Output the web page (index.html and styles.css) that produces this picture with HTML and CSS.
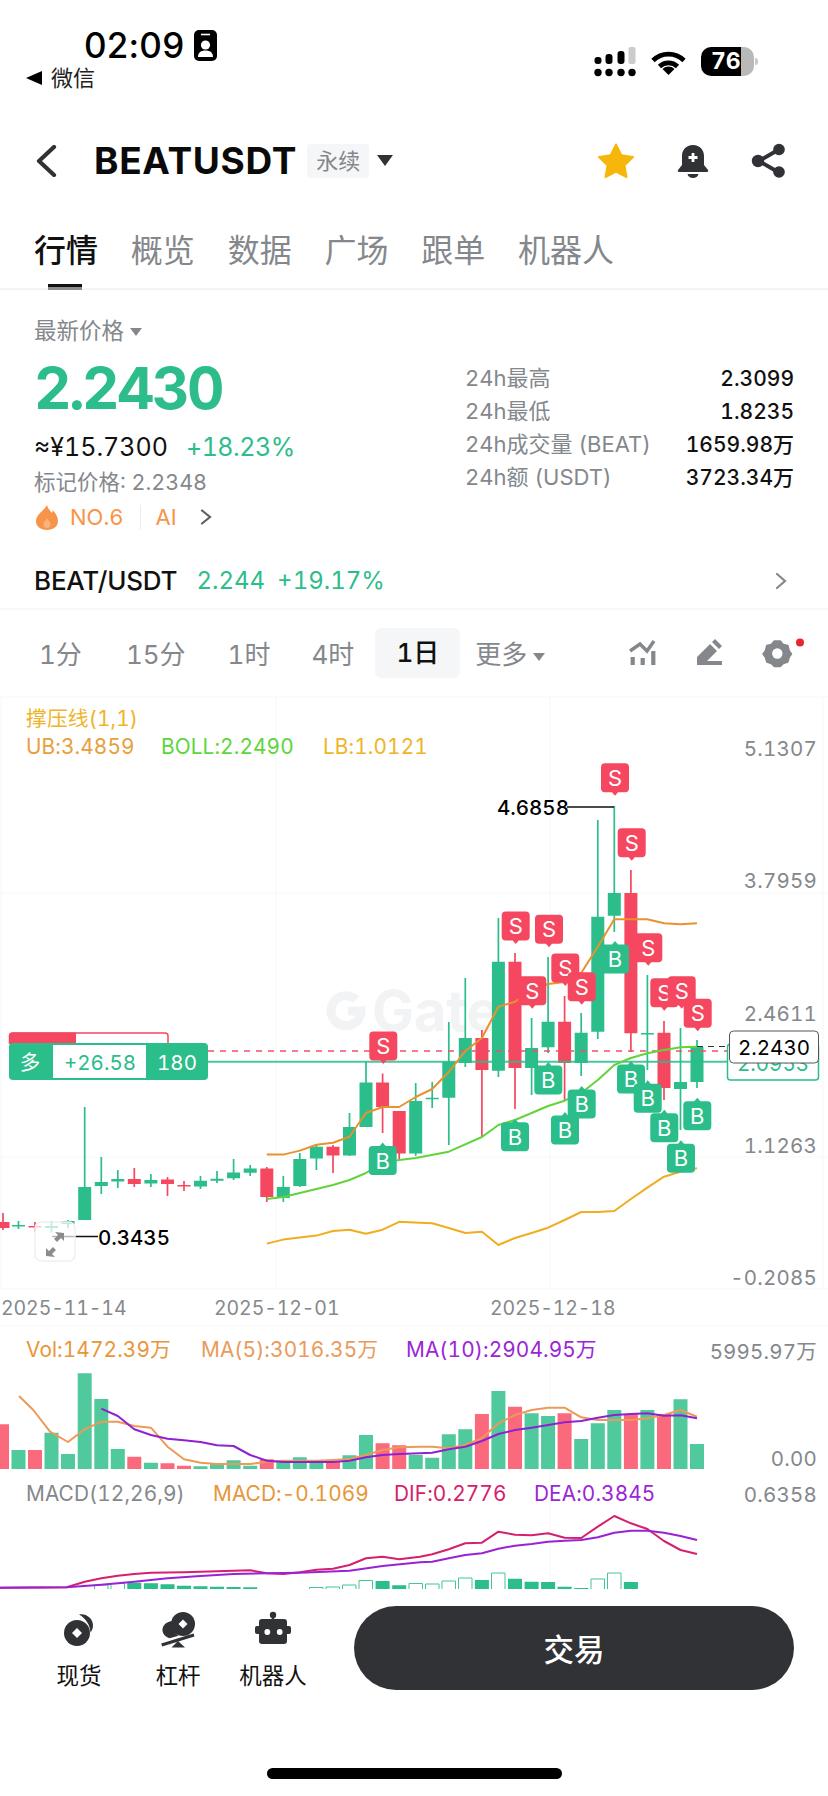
FILE: index.html
```html
<!DOCTYPE html>
<html lang="zh-CN">
<head>
<meta charset="utf-8">
<title>BEATUSDT</title>
<link rel="stylesheet" href="styles.css">
</head>
<body>
<div class="phone">

  <header class="status">
    <div class="status-left">
      <div class="clock-row">
        <span class="clock">02:09</span>
        <svg class="focus-icon" width="23" height="31" viewBox="0 0 23 31"><rect width="23" height="31" rx="5" fill="#000"/><path d="M7 4.500h9" stroke="#fff" stroke-width="1.600"/><circle cx="11.500" cy="15" r="4.600" fill="#fff"/><path d="M4 27c0-4.500 3-6.500 7.500-6.500s7.500 2 7.500 6.500z" fill="#fff"/></svg>
      </div>
      <div class="back-app"><span class="back-tri"></span><span>微信</span></div>
    </div>
    <div class="status-right">
      <svg width="42" height="30" viewBox="0 0 42 30"><g fill="#000"><circle cx="4" cy="25.500" r="3.700"/><circle cx="15" cy="25.500" r="3.700"/><circle cx="27" cy="25.500" r="3.700"/><circle cx="38" cy="25.500" r="3.700"/><rect x=".5" y="10" width="7" height="7" rx="3"/><rect x="11.500" y="7" width="7" height="10" rx="3"/><rect x="23.500" y="4" width="7" height="13" rx="3"/></g><rect x="34.500" width="7" height="17" rx="2" fill="#ccc"/></svg>
      <svg class="wifi" width="37" height="28" viewBox="0 0 37 28"><g fill="none" stroke="#000" stroke-width="4.600"><path d="M3 12.500A22 22 0 0 1 34 12.500"/><path d="M9.500 18.500A13 13 0 0 1 27.500 18.500"/></g><path d="M18.500 27l-6-6a8.500 8.500 0 0 1 12 0z" fill="#000"/></svg>
      <div class="battery">76</div>
    </div>
  </header>

  <nav class="topbar">
    <svg class="back" width="22" height="32" viewBox="0 0 22 32"><path d="M19 2L4 16l15 14" fill="none" stroke="#303236" stroke-width="4.200" stroke-linecap="round" stroke-linejoin="round"/></svg>
    <h1 class="symbol">BEATUSDT</h1>
    <span class="perp">永续</span>
    <span class="caret"></span>
    <div class="top-actions">
      <svg width="38" height="36" viewBox="0 0 38 36"><path d="M19 1.500l5.300 10.800 11.700 1.700-8.500 8.300 2 11.700L19 28.500 8.500 34l2-11.700L2 14l11.700-1.700z" fill="#f6b60c" stroke="#f6b60c" stroke-width="2" stroke-linejoin="round"/></svg>
      <svg width="32" height="34" viewBox="0 0 32 34"><path d="M16 1c7 0 11 5 11 11v9l4 5c.6.8 0 2-1 2H2c-1 0-1.600-1.200-1-2l4-5v-9C5 6 9 1 16 1z" fill="#303236"/><path d="M10.500 30h11c-.5 2.400-2.800 4-5.500 4s-5-1.600-5.500-4z" fill="#303236"/><path d="M16 9v9M11.500 13.500h9" stroke="#fff" stroke-width="2.800"/></svg>
      <svg width="36" height="36" viewBox="0 0 36 36"><path d="M27 7L8 18l19 11" fill="none" stroke="#303236" stroke-width="4"/><circle cx="28" cy="6.500" r="5.800" fill="#303236"/><circle cx="28" cy="29" r="5.800" fill="#303236"/><circle cx="7" cy="18" r="6.200" fill="#303236"/></svg>
    </div>
  </nav>

  <div class="tabs">
    <span class="tab is-active">行情</span>
    <span class="tab">概览</span>
    <span class="tab">数据</span>
    <span class="tab">广场</span>
    <span class="tab">跟单</span>
    <span class="tab">机器人</span>
  </div>

  <section class="quote">
    <div class="quote-left">
      <div class="price-label">最新价格<span class="mini-caret"></span></div>
      <div class="price">2.2430</div>
      <div class="price-sub"><span class="fiat">≈¥15.7300</span><span class="up change">+18.23%</span></div>
      <div class="mark">标记价格: 2.2348</div>
      <div class="rank">
        <svg width="22" height="25" viewBox="0 0 22 25"><path d="M11 0c1 4 3 5.500 5 8 .5-1 .7-2 .7-3 3 3 5.300 7 5.300 11 0 5.500-4.500 9-11 9S0 21.500 0 16C0 9 8 6 11 0z" fill="#f8944a"/><path d="M11 13c1 2 3.500 3.500 3.500 6.500 0 2-1.500 3.500-3.500 3.500s-3.500-1.500-3.500-3.500C7.500 16.500 10 15 11 13z" fill="#fbb27e"/></svg>
        <span class="rank-no">NO.6</span>
        <span class="rank-sep"></span>
        <span class="rank-no">AI</span>
        <svg class="rank-chev" width="12" height="16" viewBox="0 0 12 16"><path d="M2 1.500L10 8l-8 6.500" fill="none" stroke="#5d6166" stroke-width="2.200" stroke-linecap="round"/></svg>
      </div>
    </div>
    <dl class="stats">
      <dt>24h最高</dt><dd>2.3099</dd>
      <dt>24h最低</dt><dd>1.8235</dd>
      <dt>24h成交量 (BEAT)</dt><dd>1659.98万</dd>
      <dt>24h额 (USDT)</dt><dd>3723.34万</dd>
    </dl>
  </section>

  <div class="pair">
    <span class="pair-name">BEAT/USDT</span>
    <span class="up pair-val">2.244</span>
    <span class="up pair-val">+19.17%</span>
    <svg class="pair-chev" width="12" height="18" viewBox="0 0 12 18"><path d="M2 2l8 7-8 7" fill="none" stroke="#84888c" stroke-width="2.200" stroke-linecap="round"/></svg>
  </div>

  <div class="intervals">
    <span class="iv iv-a">1分</span>
    <span class="iv iv-b">15分</span>
    <span class="iv iv-c">1时</span>
    <span class="iv iv-d">4时</span>
    <span class="iv iv-active">1日</span>
    <span class="iv iv-more">更多<span class="mini-caret"></span></span>
    <div class="tools">
      <svg width="30" height="30" viewBox="0 0 30 30"><path d="M2 13l10-7 7 7 7-10" fill="none" stroke="#84888c" stroke-width="3.400"/><path d="M4.700 19v8M14.700 20v7M25.300 13v14" stroke="#84888c" stroke-width="4.200"/></svg>
      <svg width="30" height="30" viewBox="0 0 30 30"><path d="M2 27v-8L15 6l7 7-10 10h15v4z" fill="#84888c"/><path d="M17 4l3-3 7 7-3 3z" fill="#84888c"/></svg>
      <svg width="42" height="30" viewBox="0 0 42 30"><path d="M12.300 3h6l3 3.500 4.500 1 1.500 5.500 2.200 3-2.200 3-1.500 5-4.500 1.500-3 3h-6l-3-3-4.500-1.500-1.500-5L1 16l2.300-3 1.500-5.500 4.500-1z" fill="#84888c" stroke="#84888c" stroke-width="1.500" stroke-linejoin="round"/><circle cx="15.300" cy="15.500" r="5.200" fill="#fff"/><circle cx="38" cy="4.500" r="4" fill="#e8262f"/></svg>
    </div>
  </div>

  <svg class="chart" width="828" height="899" viewBox="0 690 828 899">
    <defs>
      <path id="sell" d="M-10-14.500H10a4 4 0 0 1 4 4V10.500a4 4 0 0 1-4 4H3L0 18l-3-3.500H-10a4 4 0 0 1-4-4V-10.500a4 4 0 0 1 4-4z"/>
      <path id="buy" d="M-10 14.500H10a4 4 0 0 0 4-4V-10.500a4 4 0 0 0-4-4H3L0-18l-3 3.500H-10a4 4 0 0 0-4 4V10.500a4 4 0 0 0 4 4z"/>
    </defs>

    <!-- grid -->
    <path class="grid" d="M1 697V1289M0 697H828M0 893H828M0 1157H828M0 1289H828M276 697V1289M550 697V1289M823 697V1289M0 1326H828M550 1326V1589"/>

    <!-- watermark -->
    <path class="wm-ring" d="M356 999.500a15 15 0 1 0 5 11.500h-13"/>
    <text class="wm-text" x="372" y="1031">Gate</text>

    <!-- legend -->
    <text class="leg leg-y" x="26" y="726">撑压线(1,1)</text>
    <text class="leg leg-o" x="26" y="754">UB:3.4859</text>
    <text class="leg leg-g" x="161" y="754">BOLL:2.2490</text>
    <text class="leg leg-y" x="323" y="754">LB:1.0121</text>

    <!-- axis -->
    <text class="axis" x="817" y="755.500">5.1307</text>
    <text class="axis" x="817" y="888">3.7959</text>
    <text class="axis" x="817" y="1020.500">2.4611</text>
    <text class="axis" x="817" y="1153">1.1263</text>
    <text class="axis" x="817" y="1284.500">-0.2085</text>
    <text class="date" x="1" y="1315">2025-11-14</text>
    <text class="date" x="214" y="1315">2025-12-01</text>
    <text class="date" x="490" y="1315">2025-12-18</text>

    <!-- candles -->
    <path class="wick up-c" d="M18.500 1221V1229M51.500 1221V1232.500M68 1220V1228M84.700 1107V1220M101.300 1157V1194M117.800 1170V1188M150.900 1174V1187M200.500 1176V1189M217 1171V1183M233.600 1159V1180M250.200 1165V1176M283.300 1176V1202M299.800 1153V1187M316.400 1145V1170M349.500 1113V1156M366 1062V1127M415.700 1083V1156M432.200 1082V1108M448.800 1022V1145M465.300 978V1067M498.400 918V1077M531.600 1018V1095M548.100 957V1053M581.200 1013V1076M597.800 820V1039M614.300 806V932M647.400 975V1070M680.500 1028V1130M697 1040V1088"/>
    <path class="wick dn-c" d="M3 1213V1230M35 1222V1232M134.300 1168V1187M167.500 1177V1196M184 1181V1191M266.800 1167V1202M333 1145V1173M382.600 1073.500V1133M399.200 1111V1159M481.900 1030V1137M515 953V1109M564.600 996V1100M630.900 870V1052M664 1021V1100"/>
    <path class="body up-c" d="M18.500 1225V1226.500M51.500 1226V1228M68 1221V1224M84.700 1187V1220M101.300 1182V1186M117.800 1179V1181.500M150.900 1180V1183.500M200.500 1180.700V1186.600M217 1178.700V1180.700M233.600 1172.400V1178.300M250.200 1168.400V1172.800M283.300 1187V1198M299.800 1159V1186M316.400 1146.700V1158.600M349.500 1127V1155.400M366 1082.600V1127M415.700 1101V1153.400M432.200 1097.700V1099.300M448.800 1061.700V1097.700M465.300 1038V1063M498.400 961.700V1070.700M531.600 1048V1068M548.100 1021.700V1047.300M581.200 1032.700V1063M597.800 916.700V1031.700M614.300 893V915.700M647.400 1033V1034.500M680.500 1082V1089M697 1047V1082"/>
    <path class="body dn-c" d="M3 1222V1228M35 1226V1227.500M134.300 1179V1184M167.500 1179.500V1184M184 1185V1186.600M266.800 1168.400V1197M333 1146.700V1155.400M382.600 1082.600V1107M399.200 1111V1153.400M481.900 1038V1070M515 961.700V1068M564.600 1021.700V1063M630.900 893V1033.300M664 1032.700V1088"/>

    <!-- position lines -->
    <path class="pos-line" d="M208 1061.700H727"/>
    <path class="dash-red" d="M208 1051H727"/>
    <path class="dash-black" d="M697 1046.500H729"/>

    <!-- indicators -->
    <polyline class="ln ln-ub" points="266.800,1154.600 283.300,1154.600 299.800,1150.600 316.400,1144.700 333,1142.700 349.500,1136.800 366,1113 382.600,1107 399.200,1107 415.700,1097 432.200,1089 448.800,1072 465.300,1051 481.900,1038 498.400,1006.700 515,1001.700 531.600,990 548.100,984 564.600,982 581.200,973 597.800,946.700 614.300,919.300 630.900,919.300 647.400,919.300 664,923.300 680.500,924.300 697,923.300"/>
    <polyline class="ln ln-boll" points="266.800,1199 283.300,1197 299.800,1193 316.400,1189 333,1185 349.500,1180 366,1173 382.600,1162.500 399.200,1160 415.700,1158 448.800,1151.700 481.900,1137 498.400,1125 515,1120 531.600,1113 548.100,1106 564.600,1100.700 581.200,1093 597.800,1080 614.300,1065 630.900,1058 647.400,1053.300 664,1050 680.500,1047.300 697,1046.700"/>
    <polyline class="ln ln-lb" points="266.800,1243.600 283.300,1239.600 299.800,1237.600 316.400,1235.600 333,1231 349.500,1229.700 366,1233.700 382.600,1229.700 399.200,1221.800 420,1222.700 432.200,1223.300 448.800,1228 465.300,1233 481.900,1231.700 498.400,1245 515,1238 531.600,1233 548.100,1227.700 564.600,1220 581.200,1212 597.800,1212 614.300,1211 630.900,1199 647.400,1187.700 664,1176.700 680.500,1171.700 697,1168.300"/>

    <!-- extremes -->
    <path class="ext-line" d="M567 807H614M52 1236.500H98"/>
    <text class="ext" x="497" y="815">4.6858</text>
    <text class="ext" x="98" y="1245">0.3435</text>

    <!-- fullscreen button -->
    <rect class="fs-box" x="35" y="1222" width="40" height="39" rx="6"/>
    <path class="fs-arrow" d="M46 1256v-8l3 3 4-4 3 3-4 4 3 3zM64 1233v8l-3-3-4 4-3-3 4-4-3-3z"/>

    <!-- badges -->
    <g class="sb"><use href="#sell" x="383.300" y="1046"/><text x="383.300" y="1054">S</text></g>
    <g class="sb"><use href="#sell" x="615" y="777.700"/><text x="615" y="785.700">S</text></g>
    <g class="sb"><use href="#sell" x="631.700" y="842.700"/><text x="631.700" y="850.700">S</text></g>
    <g class="sb"><use href="#sell" x="515.700" y="926"/><text x="515.700" y="934">S</text></g>
    <g class="sb"><use href="#sell" x="549" y="929.300"/><text x="549" y="937.300">S</text></g>
    <g class="sb"><use href="#sell" x="532.300" y="990.700"/><text x="532.300" y="998.700">S</text></g>
    <g class="sb"><use href="#sell" x="565.300" y="968"/><text x="565.300" y="976">S</text></g>
    <g class="sb"><use href="#sell" x="581.700" y="986.700"/><text x="581.700" y="994.700">S</text></g>
    <g class="bb"><use href="#buy" x="615" y="959"/><text x="615" y="967">B</text></g>
    <g class="sb"><use href="#sell" x="648.300" y="947.700"/><text x="648.300" y="955.700">S</text></g>
    <g class="sb"><use href="#sell" x="664.300" y="992.700"/><text x="664.300" y="1000.700">S</text></g>
    <g class="sb"><use href="#sell" x="681.700" y="990.700"/><text x="681.700" y="998.700">S</text></g>
    <g class="sb"><use href="#sell" x="697.700" y="1013.300"/><text x="697.700" y="1021.300">S</text></g>
    <g class="bb"><use href="#buy" x="382.700" y="1160.500"/><text x="382.700" y="1168.500">B</text></g>
    <g class="bb"><use href="#buy" x="548.300" y="1080"/><text x="548.300" y="1088">B</text></g>
    <g class="bb"><use href="#buy" x="565" y="1130"/><text x="565" y="1138">B</text></g>
    <g class="bb"><use href="#buy" x="581.700" y="1104"/><text x="581.700" y="1112">B</text></g>
    <g class="bb"><use href="#buy" x="515" y="1136.700"/><text x="515" y="1144.700">B</text></g>
    <g class="bb"><use href="#buy" x="631" y="1079"/><text x="631" y="1087">B</text></g>
    <g class="bb"><use href="#buy" x="647.700" y="1098.300"/><text x="647.700" y="1106.300">B</text></g>
    <g class="bb"><use href="#buy" x="664.300" y="1127.700"/><text x="664.300" y="1135.700">B</text></g>
    <g class="bb"><use href="#buy" x="681" y="1158.300"/><text x="681" y="1166.300">B</text></g>
    <g class="bb"><use href="#buy" x="697.300" y="1115.700"/><text x="697.300" y="1123.700">B</text></g>

    <!-- position tag -->
    <path class="tag-red-out" d="M9.500 1044v-8a3 3 0 0 1 3-3H165a3 3 0 0 1 3 3v8"/>
    <path class="tag-red-fill" d="M9 1044v-8a3.500 3.500 0 0 1 3.500-3.500H76V1044z"/>
    <rect class="tag-green" x="9" y="1043" width="199" height="37" rx="4"/>
    <rect class="tag-inner" x="53" y="1045" width="93" height="33"/>
    <text class="tag-t tag-w" x="30" y="1069.500">多</text>
    <text class="tag-t tag-g" x="100" y="1069.500">+26.58</text>
    <text class="tag-t tag-w" x="177" y="1069.500">180</text>

    <!-- last price tags -->
    <rect class="box-green" x="727.500" y="1044" width="91" height="36" rx="3"/>
    <text class="box-t box-tg" x="773" y="1071">2.0953</text>
    <rect class="box-black" x="729.500" y="1031" width="89" height="32" rx="4"/>
    <text class="box-t box-tk" x="774" y="1055">2.2430</text>

    <!-- volume -->
    <text class="leg leg-vol" x="26" y="1356.500">Vol:1472.39万</text>
    <text class="leg leg-ma5" x="201" y="1356.500">MA(5):3016.35万</text>
    <text class="leg leg-ma10" x="406" y="1356.500">MA(10):2904.95万</text>
    <text class="axis" x="817" y="1358.500">5995.97万</text>
    <text class="axis" x="817" y="1465.500">0.00</text>
    <path class="vol vol-up" d="M18.500 1469V1450M51.500 1469V1432.700M68 1469V1454M84.700 1469V1373.300M101.300 1469V1399M117.800 1469V1449M150.900 1469V1462.700M200.500 1469V1466.300M217 1469V1464M233.600 1469V1460.300M250.200 1469V1465.700M283.300 1469V1461.700M299.800 1469V1457.300M316.400 1469V1461.700M349.500 1469V1455.300M366 1469V1435M415.700 1469V1455M432.200 1469V1457.700M448.800 1469V1434.300M465.300 1469V1429.300M498.400 1469V1391M531.600 1469V1413.300M548.100 1469V1416M581.200 1469V1439M597.800 1469V1423.300M614.300 1469V1410M647.400 1469V1410M680.500 1469V1399.300M697 1469V1444"/>
    <path class="vol vol-dn" d="M2 1469V1424.300M35 1469V1450M134.300 1469V1456.700M167.500 1469V1463.300M184 1469V1465.700M266.800 1469V1459.300M333 1469V1461.700M382.600 1469V1443.300M399.200 1469V1445.300M481.900 1469V1414M515 1469V1406.700M564.600 1469V1413.300M630.900 1469V1414M664 1469V1414"/>
    <polyline class="ln ln-ma5" points="19,1396 33.300,1410 50,1431.700 68,1442 84.700,1429.300 101.300,1421.700 117.800,1421.700 134.300,1426 150.900,1427.700 167.500,1446.700 184,1459.300 200.500,1462.700 217,1464 233.600,1464 250.200,1464 266.800,1461.700 283.300,1460.700 299.800,1460.700 316.400,1460.700 333,1460 349.500,1459 366,1455 382.600,1450 399.200,1447.300 420,1446.700 432.200,1446.700 448.800,1448.300 465.300,1445 481.900,1438.300 498.400,1423.300 515,1415 531.600,1410 548.100,1407.700 564.600,1407.700 581.200,1417.300 597.800,1420 614.300,1420 630.900,1420 647.400,1418.300 664,1415 680.500,1410 697,1416.700"/>
    <polyline class="ln ln-ma10" points="101.300,1408.700 117.800,1416 134.300,1429.300 150.900,1435 167.500,1438.700 184,1440.300 200.500,1442 217,1445.300 233.600,1446 250.200,1455 266.800,1460.700 283.300,1462 299.800,1462 316.400,1462 333,1462 349.500,1460.700 366,1457.300 382.600,1455 399.200,1454 420,1453.300 432.200,1452.700 448.800,1449.300 465.300,1446.700 481.900,1441 498.400,1434 515,1430 531.600,1427.700 548.100,1425 564.600,1422.300 581.200,1421 597.800,1417.700 614.300,1415 630.900,1414 647.400,1413.300 664,1415.700 680.500,1415.300 697,1418.300"/>

    <!-- macd -->
    <text class="leg leg-gray" x="26" y="1500.500">MACD(12,26,9)</text>
    <text class="leg leg-macd" x="213" y="1500.500">MACD:-0.1069</text>
    <text class="leg leg-dif" x="394" y="1500.500">DIF:0.2776</text>
    <text class="leg leg-dea" x="534" y="1500.500">DEA:0.3845</text>
    <text class="axis" x="817" y="1501.500">0.6358</text>
    <path class="hist-fill" d="M134.300 1589V1582.700M150.900 1589V1583.300M167.500 1589V1584.300M184 1589V1585.700M200.500 1589V1586.300M217 1589V1586.700M233.600 1589V1587M250.200 1589V1587.300M382.600 1589V1581M399.200 1589V1585.300M481.900 1589V1580M515 1589V1578.700M531.600 1589V1581.700M548.100 1589V1582M564.600 1589V1586.700M581.200 1589V1588M630.900 1589V1582"/>
    <path class="hist-hollow" d="M94.500 1589V1585H108V1589M111 1589V1583.500H124.500V1589M309.500 1589V1587.500H323V1589M326 1589V1587H339.500V1589M342.500 1589V1585H356V1589M359 1589V1580.500H372.500V1589M409 1589V1583.500H422.500V1589M425.500 1589V1584H439V1589M442 1589V1581H455.500V1589M458.500 1589V1578H472V1589M491.500 1589V1573H505V1589M591 1589V1579H604.500V1589M607.500 1589V1573H621V1589"/>
    <polyline class="ln ln-dif" points="0,1587.700 66.700,1587.300 84.700,1581.700 101.300,1578.300 117.800,1575.700 134.300,1574 150.900,1572.700 184,1572.300 217,1571.300 250.200,1570.300 266.800,1573.300 283.300,1574 299.800,1572.300 316.400,1569.700 333,1568.700 349.500,1565 366,1558.300 382.600,1556.700 399.200,1559.300 420,1556.700 432.200,1554.300 448.800,1549.300 465.300,1543.300 481.900,1542.700 498.400,1531.700 515,1534.700 531.600,1535.300 548.100,1533.300 564.600,1537.700 581.200,1538 597.800,1526.700 614.300,1516 630.900,1523.300 647.400,1529 664,1541 680.500,1550 697,1554"/>
    <polyline class="ln ln-dea" points="0,1587.700 66.700,1587.300 101.300,1584.700 134.300,1581.700 167.500,1578.300 200.500,1576 233.600,1574 266.800,1573.300 299.800,1572.700 349.500,1570.700 382.600,1566 420,1562.300 432.200,1561.700 448.800,1558.300 465.300,1555 481.900,1553.300 498.400,1548.700 515,1545.700 531.600,1544 548.100,1541.700 564.600,1540.700 581.200,1540 597.800,1537.300 614.300,1532.700 630.900,1530.700 647.400,1530.700 664,1532.700 680.500,1536 697,1540"/>
  </svg>

  <footer class="bottom">
    <div class="actions">
      <div class="shortcuts">
        <div class="shortcut">
          <svg width="40" height="40" viewBox="0 0 40 40"><circle cx="18" cy="23" r="13" fill="#303236"/><path d="M18 18l5 5-5 5-5-5z" fill="#fff"/><path d="M20 4.500c7-1.500 14 4 14 10.500 0 3-1 5.500-2.500 7.500C31 15 27 8.500 20 4.500z" fill="#303236"/></svg>
          <span>现货</span>
        </div>
        <div class="shortcut">
          <svg width="40" height="40" viewBox="0 0 40 40"><circle cx="25" cy="14" r="12" fill="#303236"/><path d="M25 9.500l4.500 4.500-4.500 4.500-4.500-4.500z" fill="#fff"/><path d="M10.500 12c1.500-.8 2.500-.8 3.500-.3 0 6 2.500 11 6.500 14l-9 2.500C7 27 4 23 4.500 19c.3-3 3-6 6-7z" fill="#303236"/><path d="M3.700 35L36 25" stroke="#303236" stroke-width="3.400"/><path d="M20 31l7 6.500H13.500z" fill="#303236"/></svg>
          <span>杠杆</span>
        </div>
        <div class="shortcut">
          <svg width="40" height="40" viewBox="0 0 40 40"><circle cx="20" cy="5" r="3.200" fill="#303236"/><path d="M20 6v4" stroke="#303236" stroke-width="2.400"/><rect x="6" y="9" width="28" height="25" rx="3" fill="#303236"/><rect x="2" y="16" width="36" height="8" rx="2" fill="#303236"/><circle cx="14.300" cy="22" r="2.900" fill="#fff"/><circle cx="26.700" cy="22" r="2.900" fill="#fff"/></svg>
          <span>机器人</span>
        </div>
      </div>
      <button class="trade" type="button">交易</button>
    </div>
    <div class="home-bar"></div>
  </footer>
</div>
</body>
</html>
```

FILE: styles.css
```css
* { box-sizing: border-box; margin: 0; padding: 0; }

html, body { background: #fff; }

body {
  width: 828px;
  height: 1796px;
  overflow: hidden;
  font-family: Inter, "Noto Sans CJK SC", sans-serif;
  font-variant-numeric: tabular-nums;
  color: #111;
}

.phone {
  display: flex;
  flex-direction: column;
  width: 828px;
  height: 1796px;
}

/* status bar */
.status {
  display: flex;
  justify-content: space-between;
  height: 110px;
  padding: 30px 74px 0 26px;
  flex: none;
}
.clock-row { display: flex; align-items: center; gap: 10px; margin-left: 58px; height: 31px; }
.clock { font-size: 35px; font-weight: 500; letter-spacing: .2px; color: #000; line-height: 31px; font-variant-numeric: normal; }
.focus-icon { flex: none; }
.back-app { display: flex; align-items: center; gap: 9px; margin-top: 3px; font-size: 22px; line-height: 28px; color: #222; }
.back-tri { width: 0; height: 0; border: 7px solid transparent; border-left: 0; border-right: 16px solid #000; }

.status-right { display: flex; align-items: flex-start; gap: 14px; padding-top: 17px; }
.wifi { margin-top: 1px; margin-right: -1px; }
.battery {
  position: relative;
  width: 53px;
  height: 29px;
  margin-left: 1px;
  border-radius: 10px;
  background: linear-gradient(90deg, #000 0 40px, #b9b9b9 40px);
  color: #fff;
  font-size: 23px;
  font-weight: 700;
  line-height: 29px;
  padding-left: 10px;
}
.battery::after {
  content: "";
  position: absolute;
  left: 54px;
  top: 11px;
  width: 3px;
  height: 7px;
  border-radius: 0 3px 3px 0;
  background: #c9c9c9;
}

/* title bar */
.topbar {
  display: flex;
  align-items: center;
  height: 100px;
  padding: 1px 41px 0 35px;
  flex: none;
}
.back { flex: none; }
.symbol { margin-left: 37px; font-size: 37px; font-weight: 700; letter-spacing: .7px; color: #0a0a0a; line-height: 44px; }
.perp {
  margin-left: 10px;
  width: 62px;
  height: 34px;
  background: #f5f6f7;
  border-radius: 4px;
  color: #84888c;
  font-size: 22px;
  line-height: 34px;
  text-align: center;
}
.caret { margin-left: 8px; width: 0; height: 0; border: 8px solid transparent; border-top: 11px solid #303236; border-bottom: 0; }
.top-actions { display: flex; align-items: center; gap: 42px; margin-left: auto; }

/* tabs */
.tabs {
  display: flex;
  gap: 32.800px;
  height: 80px;
  padding: 20px 0 0 34px;
  border-bottom: 2px solid #f3f4f5;
  flex: none;
}
.tab { position: relative; font-size: 32px; line-height: 42px; color: #84888c; height: 42px; }
.tab.is-active { color: #111; font-weight: 500; }
.tab.is-active::after {
  content: "";
  position: absolute;
  left: 14px;
  top: 54px;
  width: 34px;
  height: 6px;
  background: linear-gradient(#111 0 3px, #8d8d8d 3px);
}

/* quote */
.quote {
  display: flex;
  justify-content: space-between;
  height: 263px;
  padding: 26px 34px 0;
  flex: none;
}
.price-label { font-size: 22.500px; line-height: 30px; color: #84888c; }
.mini-caret {
  display: inline-block;
  width: 0;
  height: 0;
  margin-left: 6px;
  vertical-align: 3px;
  border: 6px solid transparent;
  border-top: 8px solid #84888c;
  border-bottom: 0;
}
.price { margin-top: 12px; font-size: 58px; font-weight: 700; letter-spacing: -2.500px; line-height: 60px; color: #2dbd8b; }
.price-sub { display: flex; gap: 18px; margin-top: 14px; font-size: 25px; line-height: 30px; }
.change { letter-spacing: -.5px; }
.up { color: #2dbd8b; }
.mark { margin-top: 6px; font-size: 21.500px; line-height: 28px; color: #84888c; }
.rank { display: flex; align-items: center; margin-top: 6px; height: 30px; }
.rank svg { flex: none; margin-left: 2px; }
.rank-no { font-size: 22px; color: #f8944a; margin-left: 12px; }
.rank-sep { width: 1px; height: 25px; background: #eceded; margin-left: 16px; margin-right: 3px; }
.rank .rank-chev { margin-left: 23px; }

.stats {
  display: grid;
  grid-template-columns: auto auto;
  grid-auto-rows: 33px;
  justify-content: space-between;
  width: 329px;
  padding-top: 46px;
  font-size: 22px;
  line-height: 33px;
}
.stats dt { color: #84888c; }
.stats dd { color: #111; font-size: 21px; font-weight: 500; text-align: right; }

/* pair row */
.pair {
  display: flex;
  align-items: center;
  gap: 12px;
  height: 57px;
  padding: 0 41px 0 34px;
  border-bottom: 2px solid #f6f7f8;
  font-size: 24px;
  flex: none;
}
.pair-name { font-size: 26px; font-weight: 500; margin-right: 7px; letter-spacing: -.2px; }
.pair-chev { margin-left: auto; }

/* interval row */
.intervals {
  display: flex;
  align-items: center;
  height: 80px;
  padding: 5px 0 0 39px;
  font-size: 26px;
  color: #84888c;
  flex: none;
}
.iv-b { margin-left: 44px; }
.iv-c { margin-left: 42px; }
.iv-d { margin-left: 41px; }
.iv-active {
  margin-left: 21px;
  width: 85px;
  height: 50px;
  background: #f5f6f7;
  border-radius: 6px;
  color: #111;
  line-height: 50px;
  text-align: center;
  font-weight: 500;
}
.iv-more { margin-left: 15px; }
.tools { display: flex; align-items: center; gap: 37px; margin-left: auto; padding-right: 24px; }

/* chart */
.chart { display: block; flex: none; }
.grid { fill: none; stroke: #f6f7f8; stroke-width: 1; }
.wm-ring { fill: none; stroke: #f2f3f4; stroke-width: 9; }
.wm-text { fill: #f2f3f4; font-size: 56px; font-weight: 700; }
.leg { font-size: 20.800px; letter-spacing: .1px; font-family: Inter, "Noto Sans CJK SC", sans-serif; }
.leg-y { fill: #f0b429; }
.leg-o { fill: #e8a03c; }
.leg-g { fill: #5bd63c; }
.leg-vol { fill: #e8963a; }
.leg-ma5 { fill: #ea9a5c; }
.leg-ma10 { fill: #9b26d6; }
.leg-gray { fill: #84888c; }
.leg-macd { fill: #e8963a; }
.leg-dif { fill: #d6206c; }
.leg-dea { fill: #9b26d6; }
.axis { fill: #84888c; font-size: 20.500px; text-anchor: end; letter-spacing: .2px; }
.date { fill: #84888c; font-size: 19.500px; letter-spacing: -.1px; }

.wick { fill: none; stroke-width: 1.700; }
.body { fill: none; stroke-width: 13; }
.up-c { stroke: #2bbd8a; }
.dn-c { stroke: #f5475f; }

.pos-line { fill: none; stroke: #2bbd8a; stroke-width: 2; opacity: .85; }
.dash-red { fill: none; stroke: #f0506a; stroke-width: 1.500; stroke-dasharray: 6 6; }
.dash-black { fill: none; stroke: #333; stroke-width: 1; stroke-dasharray: 6 5; }

.ln { fill: none; stroke-width: 2; stroke-linejoin: round; }
.ln-ub { stroke: #e8922f; }
.ln-boll { stroke: #63d33c; }
.ln-lb { stroke: #f0ad1f; }
.ln-ma5 { stroke: #ed9a58; }
.ln-ma10 { stroke: #8f22d0; }
.ln-dif { stroke: #d6206c; }
.ln-dea { stroke: #9a22d6; }

.ext-line { fill: none; stroke: #111; stroke-width: 1.500; }
.ext { fill: #000; font-size: 20.500px; font-weight: 500; }

.fs-box { fill: #fff; fill-opacity: .7; stroke: #eeeff0; stroke-width: 1.500; }
.fs-arrow { fill: #8a8d90; }

.sb use { fill: #f5475f; }
.bb use { fill: #2bbd8a; }
.sb text, .bb text { fill: #fff; font-size: 22px; font-weight: 400; text-anchor: middle; }

.tag-red-out { fill: #fff; stroke: #f5475f; stroke-width: 1.500; }
.tag-red-fill { fill: #f5475f; }
.tag-green { fill: #2bbd8a; }
.tag-inner { fill: #fff; }
.tag-t { font-size: 20.500px; text-anchor: middle; }
.tag-w { fill: #fff; }
.tag-g { fill: #2bbd8a; }

.box-green { fill: #fff; stroke: #2bbd8a; stroke-width: 1.500; }
.box-black { fill: #fff; stroke: #555; stroke-width: 1; }
.box-t { font-size: 20.500px; text-anchor: middle; }
.box-tg { fill: #2bbd8a; }
.box-tk { fill: #000; }

.vol { fill: none; stroke-width: 14; }
.vol-up { stroke: #50c99c; }
.vol-dn { stroke: #fb6a7c; }
.hist-fill { fill: none; stroke: #2bbd8a; stroke-width: 14; }
.hist-hollow { fill: none; stroke: #45c59a; stroke-width: 1; }

/* bottom */
.bottom { flex: 1; background: #fff; }
.actions { display: flex; align-items: flex-start; padding: 17px 34px 0 31px; }
.shortcuts { display: grid; grid-template-columns: 96px 102px 88px; padding-top: 4px; }
.shortcut { display: flex; flex-direction: column; align-items: center; gap: 11px; font-size: 22.500px; line-height: 30px; color: #111; }
.shortcut svg { display: block; }
.trade {
  margin-left: 37px;
  width: 440px;
  height: 84px;
  border: 0;
  border-radius: 42px;
  background: #303236;
  color: #fff;
  font: 500 30.500px Inter, "Noto Sans CJK SC", sans-serif;
}
.home-bar { width: 295px; height: 11px; margin: 77px 0 0 267px; border-radius: 6px; background: #000; }
```
